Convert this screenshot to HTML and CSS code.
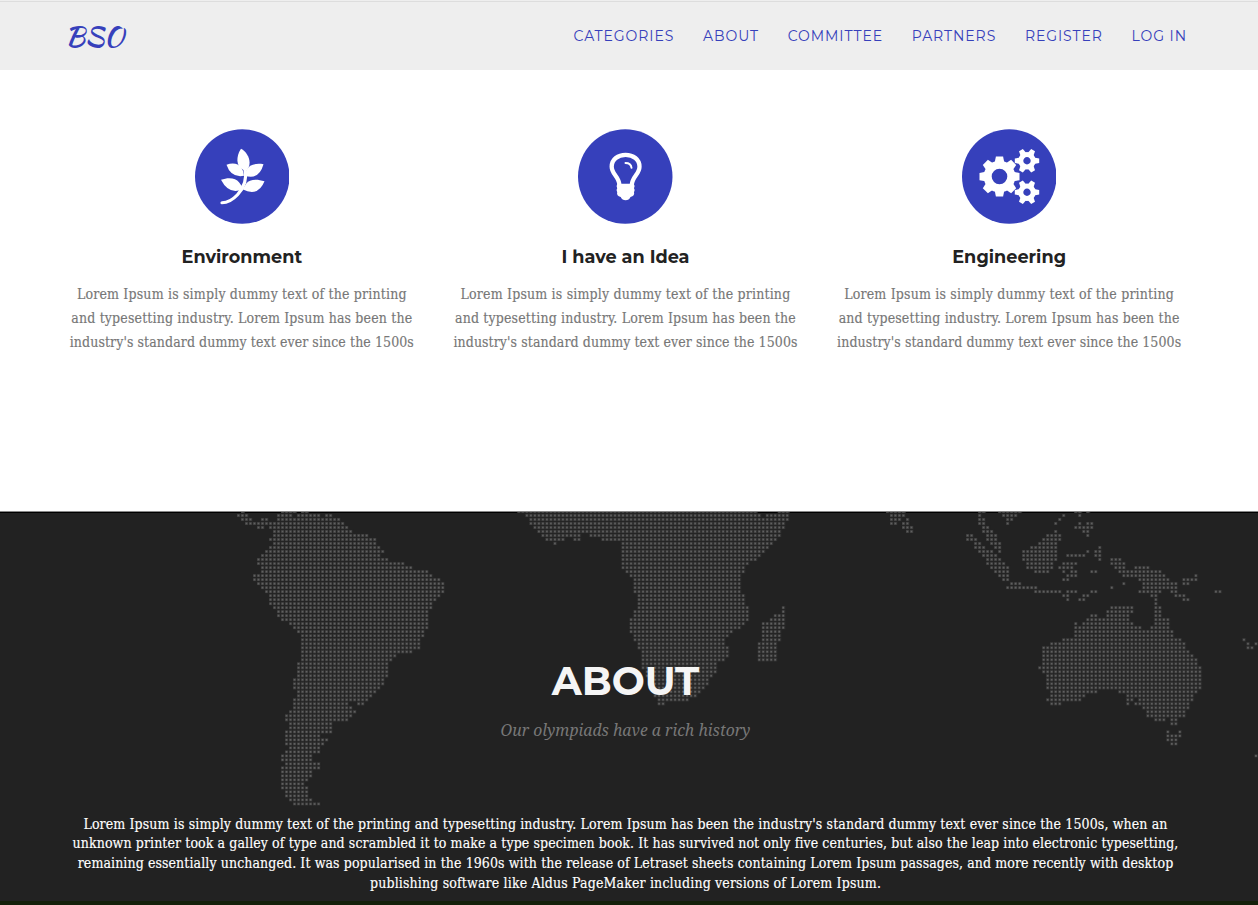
FILE: index.html
```html
<!DOCTYPE html>
<html lang="en">
<head>
<meta charset="utf-8">
<title>BSO</title>
<link rel="stylesheet" href="styles.css">
</head>
<body>
<header class="navbar">
  <a class="brand">BSO</a>
  <nav class="menu">
    <a>CATEGORIES</a>
    <a>ABOUT</a>
    <a>COMMITTEE</a>
    <a>PARTNERS</a>
    <a>REGISTER</a>
    <a>LOG IN</a>
  </nav>
</header>
<main>
  <section class="features">
    <article class="feature">
      <svg class="badge" viewBox="0 0 94.5 94.5">
        <circle class="disc" cx="47.25" cy="47.25" r="47.25"/>
        <g class="glyph">
          <path d="M46 19.500C51 22 54.600 28 54.600 33.500Q54.600 38 51 42Q42.600 39 42.400 31.500Q42.300 25 46 19.500Z"/>
          <path d="M31.500 35.500C38 33 43.500 34.500 46 38Q49 42 49 46.500Q36 49 31.500 35.500Z"/>
          <path d="M68.500 35C60 33.500 54 36 52 40Q50 43 50 46.500Q64 51 68.500 35Z"/>
          <path d="M26 50.500C34 47.500 41 49 44 53Q47 56 47.500 60Q34 66 26 50.500Z"/>
          <path d="M69.500 52C61 49 54 50.500 51.500 54L47.500 60Q63 68 69.500 52Z"/>
          <path class="stem" d="M50 40Q53 54 42.500 65.500Q35 73.500 27 73.500"/>
        </g>
      </svg>
      <h4>Environment</h4>
      <p class="copy"><span class="ls-a">Lorem Ipsum is simply dummy text of the printing</span><span class="ls-b">and typesetting industry. Lorem Ipsum has been the</span><span class="ls-c">industry's standard dummy text ever since the 1500s</span></p>
    </article>
    <article class="feature">
      <svg class="badge" viewBox="0 0 94.5 94.5">
        <circle class="disc" cx="47.25" cy="47.25" r="47.25"/>
        <g class="glyph">
          <path class="bulb" d="M41.500 56C41 47 33.700 45 33.700 37.500C33.700 30 40 25.700 47.600 25.700S61.500 30 61.500 37.500C61.500 45 54.200 47 53.700 56"/>
          <path class="shine" d="M47.500 33.700Q53 33.700 53.500 38.500"/>
          <path d="M39.500 54.500H55.700Q57.500 57 56 59Q57.500 61 56 63Q57 66.500 52.500 67.700Q51 71 47.600 71T42.700 67.700Q38.200 66.500 39.200 63Q37.700 61 39.200 59Q37.700 57 39.500 54.500Z"/>
        </g>
      </svg>
      <h4>I have an Idea</h4>
      <p class="copy"><span class="ls-a">Lorem Ipsum is simply dummy text of the printing</span><span class="ls-b">and typesetting industry. Lorem Ipsum has been the</span><span class="ls-c">industry's standard dummy text ever since the 1500s</span></p>
    </article>
    <article class="feature">
      <svg class="badge" viewBox="0 0 94.5 94.5">
        <defs>
          <path id="tooth" d="M-4.800 -14L-3.600 -20H3.600L4.800 -14Z"/>
          <path id="tooth-small" d="M-3.200 -7L-2.200 -12.200H2.200L3.200 -7Z"/>
          <g id="cog">
            <circle class="ring" r="6.200"/>
            <use href="#tooth-small" transform="rotate(30)"/><use href="#tooth-small" transform="rotate(90)"/><use href="#tooth-small" transform="rotate(150)"/><use href="#tooth-small" transform="rotate(210)"/><use href="#tooth-small" transform="rotate(270)"/><use href="#tooth-small" transform="rotate(330)"/>
          </g>
        </defs>
        <circle class="disc" cx="47.25" cy="47.25" r="47.25"/>
        <g class="glyph">
          <g transform="translate(37.500 47.300)">
            <circle class="ring big" r="11.800"/>
            <use href="#tooth"/><use href="#tooth" transform="rotate(45)"/><use href="#tooth" transform="rotate(90)"/><use href="#tooth" transform="rotate(135)"/><use href="#tooth" transform="rotate(180)"/><use href="#tooth" transform="rotate(225)"/><use href="#tooth" transform="rotate(270)"/><use href="#tooth" transform="rotate(315)"/>
          </g>
          <use href="#cog" x="65" y="31.500"/>
          <use href="#cog" x="65" y="63"/>
        </g>
      </svg>
      <h4>Engineering</h4>
      <p class="copy"><span class="ls-a">Lorem Ipsum is simply dummy text of the printing</span><span class="ls-b">and typesetting industry. Lorem Ipsum has been the</span><span class="ls-c">industry's standard dummy text ever since the 1500s</span></p>
    </article>
  </section>
  <section class="about">
    <svg class="map" width="1258" height="300" aria-hidden="true">
      <g transform="translate(237 3.5) scale(4.006)">
        <path class="dots land"/>
        <path class="dots halo"/>
        <path class="dots core" transform="translate(.16 0)"/>
      </g>
    </svg>
    <div class="about-body">
      <h2>ABOUT</h2>
      <h3>Our olympiads have a rich history</h3>
      <p class="history"><span class="ls-d">Lorem Ipsum is simply dummy text of the printing and typesetting industry. Lorem Ipsum has been the industry's standard dummy text ever since the 1500s, when an</span><span class="ls-e">unknown printer took a galley of type and scrambled it to make a type specimen book. It has survived not only five centuries, but also the leap into electronic typesetting,</span><span class="ls-e">remaining essentially unchanged. It was popularised in the 1960s with the release of Letraset sheets containing Lorem Ipsum passages, and more recently with desktop</span><span class="ls-b">publishing software like Aldus PageMaker including versions of Lorem Ipsum.</span></p>
    </div>
  </section>
  <div class="strip"></div>
</main>
<script src="script.js"></script>
</body>
</html>
```

FILE: styles.css
```css
* { box-sizing: border-box; }
body { margin: 0; height: 905px; overflow: hidden; background: #fff; font-family: Montserrat, Inter, sans-serif; }
h2, h3, h4, p { margin: 0; }

.navbar { height: 70px; padding: 2px 71px 0 65px; display: flex; justify-content: space-between; background: linear-gradient(#eee 1px, #ddd 1px, #ddd 2px, #eee 2px); color: #3640bb; }
.brand { font: 400 27.500px/68px "Kaushan Script", Lato, sans-serif; }
.menu { display: flex; gap: 28.700px; font-size: 14px; line-height: 68px; letter-spacing: .930px; }

.features { height: 441px; padding: 59px 57px 0 50px; display: grid; grid-template-columns: repeat(3, 1fr); text-align: center; }
.feature { display: flex; flex-direction: column; align-items: center; }
.badge { width: 94.500px; height: 95px; display: block; }
.disc { fill: #3640bb; }
.glyph { fill: #fff; }
.stem, .bulb, .shine, .ring { fill: none; stroke: #fff; stroke-linecap: round; }
.stem { stroke-width: 3.200px; }
.bulb { stroke-width: 4.300px; }
.shine { stroke-width: 2px; }
.ring { stroke-width: 5px; }
.big { stroke-width: 8px; }
h4 { margin-top: 21px; font-size: 17.650px; line-height: 24px; color: #222; }
.copy { margin-top: 13px; color: #777; font: 14px/24px "Roboto Slab", "DejaVu Serif Condensed", "DejaVu Serif", serif; -webkit-text-stroke: .150px; }
.copy span, .history span { display: block; white-space: nowrap; }
.ls-a { letter-spacing: .180px; }
.ls-b { letter-spacing: .150px; }
.ls-c { letter-spacing: .085px; }
.ls-d { letter-spacing: .123px; }
.ls-e { letter-spacing: .093px; }

.about { height: 390px; display: grid; background: #222; border-top: 1px solid #888; box-shadow: inset 0 1px #000; }
.map, .about-body { grid-area: 1 / 1; }
.dots { fill: none; }
.land { stroke: #262626; stroke-width: .900; }
.halo { stroke: #3e3e3e; stroke-width: .720; stroke-dasharray: .720 .280; }
.core { stroke: #606060; stroke-width: .400; stroke-dasharray: .400 .600; }
.about-body { padding: 144px 7px 0 0; text-align: center; z-index: 1; }
h2 { font-size: 39.200px; line-height: 50px; color: #f5f5f5; }
h3 { margin-top: 11px; font: italic 400 15.750px/26px "Droid Serif", "Noto Serif", "DejaVu Serif", serif; color: #777; }
.history { margin-top: 71.500px; color: #fff; font: 14px/19.700px "Roboto Slab", "DejaVu Serif Condensed", "DejaVu Serif", serif; -webkit-text-stroke: .150px; }
.strip { height: 4px; background: #14200a; }
```

FILE: script.js
```js
// Dotted world map: one line per grid row, each entry is a dot column or a first-last run.
const rows = `
1 11-14 16-17 70-129 135-137 162-166 185-186 190-195 209-210 212
0-2 10-13 15-20 22-23 72-130 132-137 163-166 185 191-194 206 210
1-3 6-7 10-25 73-137 163-165 167 185-186 192-193 205
2-26 73-136 163-164 166-167 185-186 192 204 210 212-213
5-6 8-27 74-136 166-168 186-187 209-213
9-28 75-135 167-168 186-188 204 211-212
9-32 76-85 88-135 182-183 187-189 202-205 212
8-34 77-81 84-85 91-134 182-184 187-189 201-205
9-34 79 96-133 184-185 188-190 200-204
8-35 96-132 184-186 189-190 198-204 215
7-36 96-131 185-188 190 196-204 212 214-215
6-35 96-130 186-189 196-204 207-211 214-215
5-37 96-129 187-190 196-204 215 218-220
5-41 96-127 187-191 197-203 206-209 218-221
6-43 96-126 188-192 197-203 205-208 219-221 224-227
6-47 97-126 189-192 199-202 206 208-209 213-214 220-230
4-48 98-125 190-192 207-209 221-231 239
4-50 99-125 191-192 206-207 225-232 236-239
5-51 99-125 193-195 221 226-234 236-237
6-51 99-125 192-199 218 226-234
7-51 99-125 199-205 207-209 213-214 225-230 233-234 244-245
8-50 100-126 206-207 211-212 228-229 234-236
8-49 100-126 207 210-211 229 236-237
8-48 100-126 229
9-48 100-127 136 218-223 229-230
10-47 99-127 136 217-223 229-230
10-47 99-127 134-136 213-214 217-222 229-230
11-47 98-127 133-136 212-222 229-232
13-47 98-126 131-136 209 211-223 229-232
14-47 98-125 131-136 209-225 228-232
15-46 98-123 131-135 209-233
16-46 99-122 131-135 209-233
16-45 99-121 131-135 206-235 251
16-45 100-121 130-134 203-236 252 254
16-45 100-122 130-134 201-236 252-253
16-43 101-122 130-134 201-237
16-39 101-122 130-134 201-238
16-38 101-121 130-134 201-239
15-37 101-119 201-239
15-37 101-119 200-240
15-37 102-119 201-240
15-37 102-118 202-240
14-36 103-117 202-240
14-36 103-117 202-240
14-35 103-116 202-240
15-34 104-115 203-214 220-239
15-33 104-114 203-211 222-238
14-32 105-112 202-210 222-223 225-238
14-27 30-31 105-106 203-205 222 224-237
14-28 226-237
13-29 227-236
12-28 227-236
12-27 229-231 233-234
13-23 233-234
13-23
12-23 232 235
12-20 232-235
12-22 232-234
12-21 233-234
13-20
12-20
11-18 254
11-18
12-20
11-20
11-18
11-18
11-17
11-16
11-17
12-17
12-17
13-18
14-20`.trim().split("\n");

const outline = rows.map((row, i) =>
  row.split(" ").map(run => {
    const [first, last = first] = run.split("-").map(Number);
    return `M${first} ${i - 1}h${last - first + 1}`;
  }).join("")).join("");

document.querySelectorAll(".dots").forEach(path => path.setAttribute("d", outline));
```
